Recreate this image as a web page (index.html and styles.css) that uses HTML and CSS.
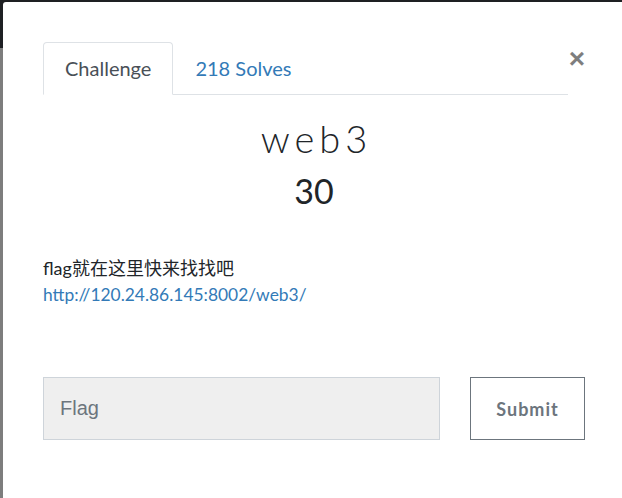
FILE: index.html
```html
<!DOCTYPE html>
<html lang="zh">
<head>
<meta charset="utf-8">
<title>web3</title>
<link rel="stylesheet" href="styles.css">
</head>
<body>
<div class="modal">
  <div class="modal-body">
    <div class="header">
      <ul class="nav-tabs">
        <li class="tab active">Challenge</li>
        <li class="tab">218 Solves</li>
      </ul>
      <button class="close" type="button">×</button>
    </div>
    <h2 class="title">web3</h2>
    <h3 class="value">30</h3>
    <div class="desc">
      <p class="desc-text">flag就在这里快来找找吧</p>
      <a class="desc-link" href="#">http://120.24.86.145:8002/web3/</a>
    </div>
    <form class="flag-row">
      <input class="flag-input" type="text" placeholder="Flag">
      <button class="submit" type="button">Submit</button>
    </form>
  </div>
</div>
</body>
</html>
```

FILE: styles.css
```css
html, body {
  margin: 0;
  padding: 0;
  height: 100%;
  overflow: hidden;
}
body {
  background: linear-gradient(to bottom, #1e2023 0, #1e2023 48px, #7d7d7d 48px, #7d7d7d 100%);
  font-family: Lato, "Noto Sans CJK SC", sans-serif;
}
.modal {
  margin: 2px 0 0 3px;
  height: 496px;
  background: #fff;
  border-top-left-radius: 3px;
}
.modal-body {
  padding: 40px 0 0 40px;
  width: 542px;
}
.header {
  display: flex;
  justify-content: space-between;
  align-items: flex-start;
}
.nav-tabs {
  list-style: none;
  margin: 0;
  padding: 0;
  width: 525px;
  display: flex;
  border-bottom: 1px solid #dee2e6;
}
.tab {
  padding: 12px 21px;
  font-size: 20px;
  line-height: 27px;
  color: #337ab7;
  border: 1px solid transparent;
  border-top-left-radius: 4px;
  border-top-right-radius: 4px;
  margin-bottom: -1px;
}
.tab.active {
  color: #495057;
  border-color: #dee2e6 #dee2e6 #fff;
  background: #fff;
}
.close {
  border: 0;
  background: none;
  padding: 0;
  margin-top: 3px;
  font-family: "Liberation Sans", sans-serif;
  font-size: 28px;
  font-weight: 700;
  line-height: 28px;
  color: #000;
  opacity: .5;
}
.title {
  margin: 21px 0 0;
  padding-left: 5px;
  text-align: center;
  font-family: Lato, sans-serif;
  font-weight: 300;
  font-size: 38px;
  line-height: 44px;
  letter-spacing: 5px;
  color: #212529;
}
.value {
  margin: 11px 0 0;
  text-align: center;
  font-family: Lato, sans-serif;
  font-weight: 400;
  font-size: 34px;
  line-height: 40px;
  color: #212529;
}
.desc {
  margin-top: 44px;
  font-size: 18px;
  line-height: 26px;
  color: #212529;
}
.desc-text {
  margin: 0;
}
.desc-link {
  color: #337ab7;
  text-decoration: none;
  font-size: 17.4px;
}
.flag-row {
  margin-top: 69px;
  display: flex;
  justify-content: space-between;
}
.flag-input {
  box-sizing: border-box;
  width: 397px;
  height: 63px;
  margin: 0;
  padding: 0 16px;
  background: #efefef;
  border: 1px solid #ced4da;
  font-family: "Liberation Sans", sans-serif;
  font-size: 20px;
  color: #495057;
}
.flag-input::placeholder {
  color: #6c757d;
}
.submit {
  box-sizing: border-box;
  width: 115px;
  height: 63px;
  background: #fff;
  border: 1px solid #6c757d;
  font-family: Lato, sans-serif;
  font-weight: 700;
  font-size: 18px;
  letter-spacing: 1px;
  color: #6c757d;
}
```
